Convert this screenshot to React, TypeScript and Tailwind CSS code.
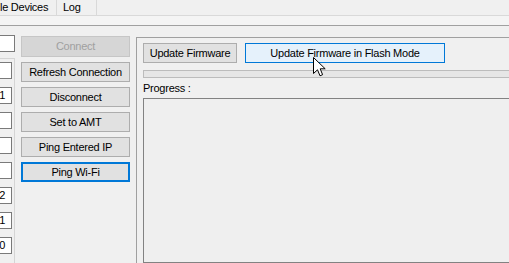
const btn =
  "h-[20px] w-full flex items-center justify-center bg-[#e1e1e1] border border-[#adadad] text-black";

const ValueBox = ({ text }: { text?: string }) => (
  <div className="h-[17px] w-[12px] shrink-0 bg-white border border-[#7a7a7a] border-l-0 flex items-center justify-end pr-[6px] leading-none overflow-hidden">
    {text}
  </div>
);

const App = () => {
  const values = ["", "1", "", "", "", "2", "1", "0"];

  return (
    <div className="relative w-[509px] h-[263px] overflow-hidden bg-[#f0f0f0] font-['Liberation_Sans',Arial,sans-serif] text-[11px] tracking-[-0.25px] text-black">
      {/* tab strip */}
      <div className="h-[16px] flex border-b border-[#d9d9d9] leading-[15px]">
        <div className="w-[57px] border-r border-[#d9d9d9] whitespace-nowrap">le Devices</div>
        <div className="w-[40px] border-r border-[#d9d9d9] pl-[6px]">Log</div>
      </div>
      <div className="h-[9px] bg-[#f4f4f4]" />

      <div className="h-[238px] flex border-t border-[#a0a0a0]">
        {/* value boxes */}
        <div className="w-[15px] shrink-0 flex flex-col">
          <div className="mt-[9px] h-[17px] w-[15px] bg-white border border-[#7a7a7a] border-l-0" />
          <div className="mt-[6px] flex-1 border-t border-r border-[#d5d5d5] flex flex-col gap-[8px] pt-[3px]">
            {values.map((v, i) => (
              <ValueBox key={i} text={v} />
            ))}
          </div>
        </div>

        {/* action buttons */}
        <div className="ml-[6px] w-[109px] shrink-0 flex flex-col gap-[5px] pt-[10px]">
          <div className="h-[21px] w-full flex items-center justify-center bg-[#d6d6d6] border border-[#c6c6c6] text-[#a0a0a0]">
            Connect
          </div>
          <div className={btn}>Refresh Connection</div>
          <div className={btn}>Disconnect</div>
          <div className={btn}>Set to AMT</div>
          <div className={btn}>Ping Entered IP</div>
          <div className="h-[20px] w-full flex items-center justify-center bg-[#e1e1e1] border-2 border-[#0078d7] text-black">
            Ping Wi-Fi
          </div>
        </div>

        {/* firmware panel */}
        <div className="ml-[6px] mt-[11px] flex-1 flex flex-col border-l border-t border-[#a0a0a0] pl-[6px] pt-[5px] -mr-[4px]">
          <div className="flex gap-[8px]">
            <div className="h-[20px] w-[94px] flex items-center justify-center bg-[#e1e1e1] border border-[#adadad]">
              Update Firmware
            </div>
            <div className="h-[20px] w-[200px] flex items-center justify-center bg-[#e5f1fb] border border-[#0078d7]">
              Update Firmware in Flash Mode
            </div>
          </div>
          <div className="mt-[7px] h-[8px] border border-[#bcbcbc] bg-[#e6e6e6]" />
          <div className="mt-[2px] h-[16px] leading-[16px]">Progress :</div>
          <div className="mt-[2px] flex-1 border border-[#828282] bg-[#efefef]" />
        </div>
      </div>

      {/* mouse pointer */}
      <svg
        className="absolute left-[313px] top-[57px]"
        width="13"
        height="20"
        viewBox="0 0 13 20"
        fill="none"
      >
        <path
          d="M0.5 0.5 L0.5 16.5 L4.5 12.8 L7 18.8 L9.6 17.7 L7.2 11.8 L12.2 11.8 Z"
          fill="white"
          stroke="black"
          strokeLinejoin="round"
        />
      </svg>
    </div>
  );
};

export default App;
